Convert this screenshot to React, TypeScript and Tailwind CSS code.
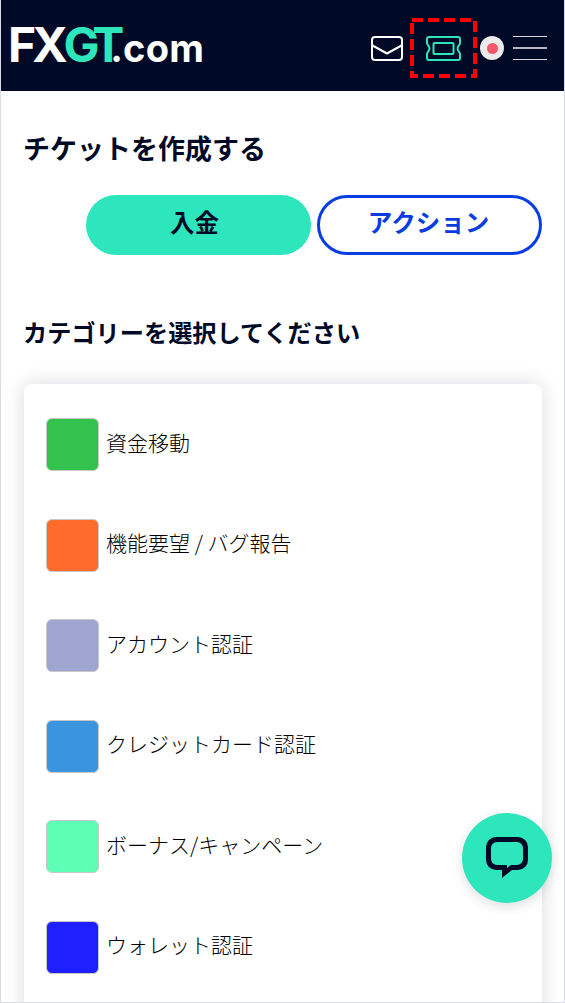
const categories = [
  { label: "資金移動", color: "bg-[#34c24f]" },
  { label: "機能要望 / バグ報告", color: "bg-[#ff6b2b]" },
  { label: "アカウント認証", color: "bg-[#a0a5d0]" },
  { label: "クレジットカード認証", color: "bg-[#3a94de]" },
  { label: "ボーナス/キャンペーン", color: "bg-[#5cffb4]" },
  { label: "ウォレット認証", color: "bg-[#201fff]" },
];

function Logo() {
  return (
    <div className="-mt-[1px] flex items-baseline font-['Inter',sans-serif] font-bold leading-none text-white">
      <span className="text-[48px] tracking-[-4px]">FX</span>
      <span className="text-[48px] tracking-[-6px] text-[#2de6bc]">GT</span>
      <span className="ml-[-8px] text-[38px] tracking-[0.2px]">.com</span>
    </div>
  );
}

function MailIcon() {
  return (
    <svg width="32" height="25" viewBox="0 0 32 25" fill="none" stroke="white" strokeWidth="2" strokeLinejoin="round" strokeLinecap="round">
      <rect x="1" y="1" width="30" height="23" rx="3" />
      <path d="M1.500 9.500 L16 17.500 L30.500 9.500" />
    </svg>
  );
}

function TicketIcon() {
  return (
    <svg width="37" height="25" viewBox="0 0 37 25" fill="none" stroke="#2de6bc" strokeWidth="2" strokeLinejoin="round">
      <path d="M4 1 H33 a2 2 0 0 1 2 2 V7 c0 2 -2.500 3 -2.500 5.500 s2.500 3.500 2.500 5.500 V22 a2 2 0 0 1 -2 2 H4 a2 2 0 0 1 -2 -2 V18 c0 -2 2.500 -3 2.500 -5.500 s-2.500 -3.500 -2.500 -5.500 V3 a2 2 0 0 1 2 -2 Z" />
      <rect x="8.500" y="7" width="20" height="11" rx="1" />
    </svg>
  );
}

function ChatIcon() {
  return (
    <svg width="42" height="42" viewBox="0 0 42 42" fill="#000a26">
      <path fillRule="evenodd" d="M10 0 H32 A10 10 0 0 1 42 10 V23 A10 10 0 0 1 32 33 H26 L16 41 V33 H10 A10 10 0 0 1 0 23 V10 A10 10 0 0 1 10 0 Z M11 5 A6 6 0 0 0 5 11 V22 A6 6 0 0 0 11 28 H21 V31 L25 28 H31 A6 6 0 0 0 37 22 V11 A6 6 0 0 0 31 5 Z" />
    </svg>
  );
}

export default function App() {
  return (
    <div className="relative h-[1003px] overflow-hidden border-x border-b border-[#d9dce8] bg-white font-['Noto_Sans_CJK_JP',sans-serif] text-[#000a26]">
      <header className="flex h-[91px] items-center justify-between bg-[#000a26] pr-[17px] pl-[7px]">
        <Logo />
        <div className="flex items-center pt-[5px]">
          <MailIcon />
          <div className="relative ml-[7px] flex h-[60px] w-[67px] items-center justify-center">
            <TicketIcon />
            <svg className="absolute inset-0" width="67" height="60" viewBox="0 0 67 60" fill="none" stroke="#f00" strokeWidth="4" strokeDasharray="11 5">
              <rect x="2" y="2" width="63" height="56" />
            </svg>
          </div>
          <div className="ml-[3px] flex h-6 w-6 items-center justify-center rounded-full bg-[#ebebeb]">
            <div className="h-[11px] w-[11px] rounded-full bg-[#f8566a]" />
          </div>
          <div className="ml-[9px] flex w-[34px] flex-col gap-[10px]">
            <div className="h-px bg-[#d8d9de]" />
            <div className="h-[2px] bg-[#b5b7c0]" />
            <div className="h-px bg-[#d8d9de]" />
          </div>
        </div>
      </header>

      <main className="pr-[22px] pl-[23px]">
        <h1 className="mt-[37px] -ml-[1px] text-[27px] leading-[40px] font-bold">チケットを作成する</h1>

        <div className="mt-[27px] flex justify-end gap-[6px]">
          <button className="h-[60px] w-[225px] rounded-full bg-[#2de6bc] pr-[8px] pb-[5px] text-[24.500px] font-bold">入金</button>
          <button className="h-[60px] w-[225px] rounded-full border-[3px] border-[#0a3de0] bg-white pr-[2px] pb-[5px] text-[24.500px] font-bold text-[#0a3de0]">
            アクション
          </button>
        </div>

        <h2 className="mt-[59px] -ml-[1px] text-[24.200px] leading-[36px] font-bold">カテゴリーを選択してください</h2>

        <div className="mt-[34px] rounded-lg bg-white px-[22px] pt-[34px] shadow-[0_0_20px_rgba(0,10,38,0.15)]">
          <ul className="flex flex-col gap-[47.500px]">
            {categories.map((item) => (
              <li key={item.label} className="flex items-center gap-[7px]">
                <span className={`h-[53px] w-[53px] shrink-0 rounded-md border border-[#c8c8c8] ${item.color}`} />
                <span className="pb-[5px] text-[21px] leading-none font-light text-[#000000]">{item.label}</span>
              </li>
            ))}
          </ul>
          <div className="h-[60px]" />
        </div>
      </main>

      <button className="absolute top-[813px] left-[461px] flex h-[90px] w-[90px] items-center justify-center rounded-full bg-[#2de6bc] shadow-[0_4px_12px_rgba(0,0,0,0.12)]">
        <ChatIcon />
      </button>
    </div>
  );
}
